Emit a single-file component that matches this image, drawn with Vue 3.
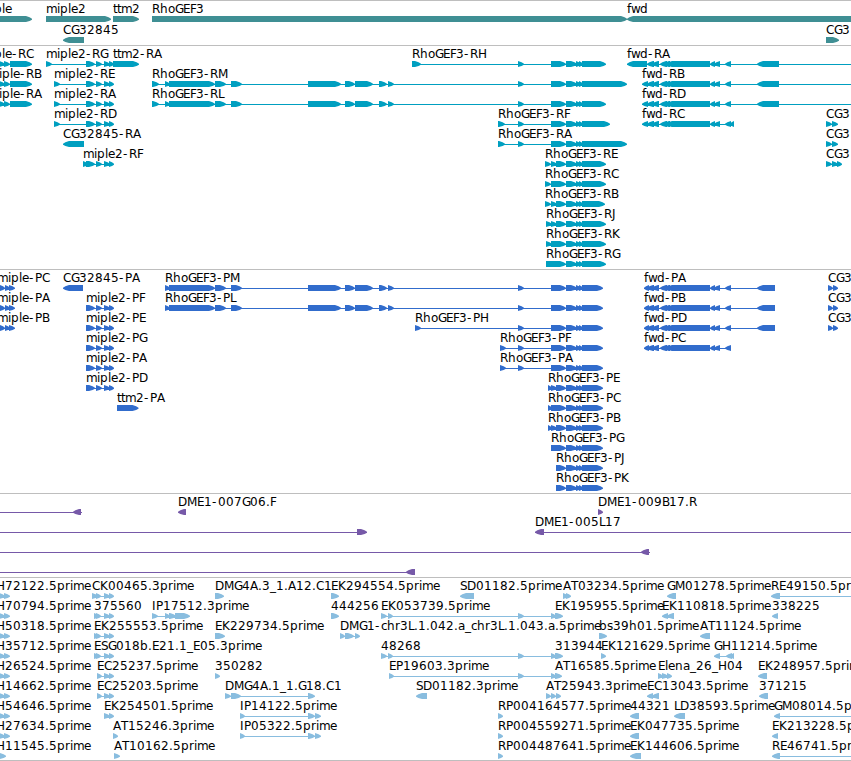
<script setup>
// Exon clusters shared by several isoforms: [start, end]
const mipleTail = [[86, 95], [96, 102], [104, 110], [109, 114]]
const rhoBody = [[169, 215], [215, 226], [231, 242], [308, 341], [345, 355], [355, 373], [379, 387], [388, 394]]
const rhoEnd = (end) => [[566, 577], [576, 581], [579, 583], [582, end]]
const rhoTail = (end) => [[551, 566], ...rhoEnd(end)]
const fwdBody = [[647, 654], [652, 659], [660, 667], [663, 670], [666, 710], [710, 715], [714, 720], [725, 731]]

const f = (label, x, row, exons, dir = 1, line = null) => ({ label, x, row, exons, dir, line })
const rows = (labels, x, first, exons, dir = 1, line = null) =>
    labels.map((label, i) => f(label, x, first + i, exons, dir, line))

const tracks = [
    {
        name: 'gene', height: 45, step: 21, color: '#3f8f94',
        features: [
            f('miple', -20, 0, [[-20, 32]]),
            f('miple2', 46, 0, [[46, 111]]),
            f('ttm2', 113, 0, [[113, 139]]),
            f('RhoGEF3', 152, 0, [[152, 627]]),
            f('fwd', 627, 0, [[627, 900]], -1),
            f('CG32845', 63, 1, [[63, 84]], -1),
            f('CG3', 826, 1, [[826, 839]])
        ]
    },
    {
        name: 'transcript', height: 224, step: 20, color: '#009fc0',
        features: [
            f('miple-RC', -20, 0, [[-2, 5], [4, 10], [10, 32]]),
            f('miple-RB', -12, 1, [[-2, 5], [4, 10], [10, 32]]),
            f('miple-RA', -12, 2, [[-2, 5], [4, 10], [10, 32]]),
            f('miple2-RG', 46, 0, [[46, 52], ...mipleTail]),
            f('ttm2-RA', 113, 0, [[113, 139]]),
            ...rows(['miple2-RE', 'miple2-RA', 'miple2-RD'], 54, 1, [[54, 60], ...mipleTail]),
            f('CG32845-RA', 63, 4, [[63, 84]], -1),
            f('miple2-RF', 83, 5, [[83, 88], ...mipleTail]),
            f('RhoGEF3-RM', 152, 1, [[152, 159], [165, 170], ...rhoBody, [518, 524], ...rhoTail(627)]),
            f('RhoGEF3-RL', 152, 2, [[152, 159], [165, 170], ...rhoBody, [518, 524], ...rhoTail(606)]),
            f('RhoGEF3-RH', 412, 0, [[412, 421], [518, 524], ...rhoTail(606)]),
            f('RhoGEF3-RF', 498, 3, [[498, 505], [518, 524], ...rhoTail(610)]),
            f('RhoGEF3-RA', 498, 4, [[498, 505], [518, 524], ...rhoTail(627)]),
            f('RhoGEF3-RE', 545, 5, [[545, 551], [551, 557], [556, 566], ...rhoEnd(606)]),
            f('RhoGEF3-RC', 545, 6, [[545, 551], ...rhoTail(606)]),
            f('RhoGEF3-RB', 545, 7, [[545, 551], [551, 557], [556, 566], ...rhoEnd(605)]),
            f('RhoGEF3-RJ', 546, 8, [[546, 552], [551, 557], [556, 566], ...rhoEnd(606)]),
            f('RhoGEF3-RK', 546, 9, [[546, 552], ...rhoTail(606)]),
            f('RhoGEF3-RG', 546, 10, [[546, 566], ...rhoEnd(606)]),
            f('fwd-RA', 627, 0, [[627, 647], ...fwdBody, [757, 779]], -1, [627, 851]),
            ...rows(['fwd-RB', 'fwd-RD'], 642, 1, [[642, 648], ...fwdBody, [757, 779]], -1, [642, 851]),
            f('fwd-RC', 642, 3, [[642, 648], ...fwdBody, [730, 734]], -1),
            ...rows(['CG3', 'CG3'], 826, 3, [[826, 832], [832, 838]]),
            f('CG3', 826, 5, [[826, 832], [832, 838], [837, 842]])
        ]
    },
    {
        name: 'protein', height: 224, step: 20, color: '#316ccc',
        features: [
            ...rows(['miple-PC', 'miple-PA', 'miple-PB'], -3, 0, [[0, 5], [5, 10], [9, 15]]),
            f('CG32845-PA', 63, 0, [[63, 83]], -1),
            ...rows(['miple2-PF', 'miple2-PE', 'miple2-PG', 'miple2-PA', 'miple2-PD'], 86, 1, mipleTail),
            f('ttm2-PA', 117, 6, [[117, 138.5]]),
            ...rows(['RhoGEF3-PM', 'RhoGEF3-PL'], 165, 0, [[165, 170], ...rhoBody, [518, 524], ...rhoTail(603)]),
            f('RhoGEF3-PH', 415, 2, [[415, 421], [518, 524], ...rhoTail(603)]),
            ...rows(['RhoGEF3-PF', 'RhoGEF3-PA'], 500, 3, [[500, 506], [518, 524], ...rhoTail(603)]),
            f('RhoGEF3-PE', 548, 5, [[548, 552], [551, 557], [556, 566], ...rhoEnd(603)]),
            f('RhoGEF3-PC', 548, 6, [[548, 552], ...rhoTail(603)]),
            f('RhoGEF3-PB', 548, 7, [[548, 552], [551, 557], [556, 566], ...rhoEnd(603)]),
            f('RhoGEF3-PG', 551, 8, rhoTail(603)),
            ...rows(['RhoGEF3-PJ', 'RhoGEF3-PK'], 556, 9, [[556, 566], ...rhoEnd(603)]),
            ...rows(['fwd-PA', 'fwd-PB', 'fwd-PD'], 644, 0, [[644, 649], ...fwdBody, [757, 775]], -1),
            f('fwd-PC', 644, 3, [[644, 649], ...fwdBody], -1),
            ...rows(['CG3', 'CG3', 'CG3'], 828, 0, [[828, 833], [833, 838]])
        ]
    },
    {
        name: 'bac', height: 84, step: 20, color: '#7659a8',
        features: [
            f('', 0, 0, [[73, 81]], -1, [0, 82]),
            f('DME1-007G06.F', 178, 0, [[178, 186]], -1),
            f('DME1-009B17.R', 598, 0, [[598, 603]]),
            f('', 0, 1, [[357, 367]], 1, [0, 367]),
            f('DME1-005L17', 535, 1, [[535, 544]], -1, [535, 851]),
            f('', 0, 2, [[641, 649]], -1, [0, 650]),
            f('', 0, 3, [[406, 415]], -1, [0, 415])
        ]
    },
    {
        name: 'est', height: 183, step: 20, color: '#89bddf',
        features: [
            ...rows(['RH72122.5prime', 'RH70794.5prime', 'RH50318.5prime', 'RH35712.5prime', 'RH26524.5prime',
                'RH14662.5prime', 'RH54646.5prime', 'RH27634.5prime'], -12, 0, [[-2, 5], [4, 10]]),
            f('RH11545.5prime', -12, 8, [[0, 6]]),
            f('CK00465.3prime', 92, 0, [[92, 98], [96, 101], [104, 110], [109, 114]]),
            ...rows(['375560', 'EK255553.5prime', 'ESG018b.E21.1_E05.3prime'], 94, 1, [[94, 99], [96, 101], [104, 110], [109, 114]]),
            ...rows(['EC25237.5prime', 'EC25203.5prime'], 97, 4, [[97, 102], [104, 110], [109, 114]]),
            f('EK254501.5prime', 104, 6, [[104, 110], [109, 114]]),
            f('AT15246.3prime', 113, 7, [[113, 118]]),
            f('AT10162.5prime', 114, 8, [[114, 120]]),
            f('DMG4A.3_1.A12.C1', 215, 0, [[215, 224]]),
            f('IP17512.3prime', 152, 1, [[152, 158], [165, 170], [169, 176], [175, 190]]),
            f('EK229734.5prime', 215, 2, [[215, 225]]),
            f('350282', 215, 4, [[215, 220]]),
            f('DMG4A.1_1.G18.C1', 225, 5, [[225, 231], [231, 241], [308, 315]]),
            ...rows(['IP14122.5prime', 'IP05322.5prime'], 240, 6, [[240, 245], [308, 315], [315, 321]]),
            f('EK294554.5prime', 331, 0, [[331, 339]]),
            f('444256', 331, 1, [[331, 339]]),
            f('EK053739.5prime', 381, 1, [[381, 387], [388, 393], [518, 524], [551, 556], [555, 563]]),
            f('DMG1-chr3L.1.042.a_chr3L.1.043.a.5prime', 340, 2, [[340, 345], [345, 354], [355, 360]]),
            f('48268', 381, 3, [[381, 387], [388, 393], [518, 524], [551, 556], [555, 563]]),
            f('EP19603.3prime', 389, 4, [[389, 394], [518, 524], [551, 556], [555, 562]]),
            f('SD01182.5prime', 460, 0, [[460, 474]], -1),
            f('SD01182.3prime', 416, 5, [[416, 427]], -1),
            ...rows(['RP004164577.5prime', 'RP004559271.5prime', 'RP004487641.5prime'], 498, 6, [[498, 503]]),
            f('AT03234.5prime', 563, 0, [[563, 568], [566, 571]]),
            f('EK195955.5prime', 555, 1, []),
            f('313944', 555, 3, []),
            f('AT16585.5prime', 555, 4, []),
            f('AT25943.3prime', 546, 5, [[546, 551], [551, 556], [556, 561]]),
            f('GM01278.5prime', 667, 0, [[667, 676]], -1),
            f('EK110818.5prime', 662, 1, [[662, 668], [667, 674]], -1),
            f('bs39h01.5prime', 599, 2, [[599, 607]]),
            f('AT11124.5prime', 700, 2, [[700, 710]], -1),
            f('EK121629.5prime', 601, 3, [[601, 606]]),
            f('GH11214.5prime', 714, 3, [[714, 720], [726, 732], [730, 734]], -1),
            f('Elena_26_H04', 658, 4, [[658, 663], [662, 668], [667, 672]]),
            f('EK248957.5prime', 758, 4, [[758, 767]], -1),
            f('EC13043.5prime', 647, 5, [[647, 653], [652, 659]], -1),
            f('371215', 759, 5, [[759, 768]], -1),
            f('44321', 630, 6, [[630, 639]], -1),
            f('LD38593.5prime', 674, 6, [[674, 685]], -1),
            f('GM08014.5prime', 774, 6, [[774, 780]], -1, [774, 851]),
            f('EK047735.5prime', 630, 7, [[630, 639]], -1),
            f('EK213228.5prime', 772, 7, [[772, 778]], -1),
            f('EK144606.5prime', 630, 8, [[630, 641]], -1),
            f('RE46741.5prime', 772, 8, [[772, 780]], -1, [772, 851]),
            f('RE49150.5prime', 771, 0, [[771, 780]], -1, [771, 851]),
            f('338225', 772, 1, [[772, 778]], -1)
        ]
    }
]

// Whole-pixel advances of the label face
const advances = {
    m: 11, i: 3, p: 8, l: 3, e: 7, r: 5, t: 4, h: 8, o: 7, f: 4, w: 9, d: 8, b: 8, s: 6, n: 8, a: 7, c: 6,
    A: 8, B: 7, C: 8, D: 9, E: 7, F: 6, G: 8, H: 9, I: 4, J: 4, K: 8, L: 6, M: 10, P: 7, R: 8, S: 7, T: 7,
    '-': 6, '.': 4, _: 6
}

const glyphX = (label, x) => {
    let pos = x
    return [...label].map((c) => {
        const at = pos
        pos += advances[c] ?? 8
        return at
    }).join(' ')
}

// Bar with a slightly rounded point on the side it is transcribed towards
const arrowPath = ([a, b], dir, top) => {
    const head = Math.min(6, b - a)
    const tip = dir > 0 ? b : a
    const tail = dir > 0 ? a : b
    const neck = tip - dir * head
    const mid = tip - dir * head * 0.4
    return `M${tail} ${top}H${neck}L${mid} ${top + 1.3}L${tip} ${top + 2.7}V${top + 3.7}L${mid} ${top + 4.9}L${neck} ${top + 6}H${tail}Z`
}

const featurePath = (item, step) => item.exons.map((e) => arrowPath(e, item.dir, 15 + item.row * step)).join('')

const intron = (item) => {
    if (item.line) return item.line
    if (item.exons.length < 2) return null
    return [item.exons[0][0], item.exons[item.exons.length - 1][1] - 1]
}
</script>

<template>
    <main class="browser">
        <section v-for="track in tracks" :key="track.name" class="track" :style="{ height: `${track.height}px` }">
            <svg class="lane" width="851" :height="track.height - 1" :fill="track.color">
                <g v-for="(item, index) in track.features" :key="index">
                    <rect v-if="intron(item)" :x="intron(item)[0]" :y="18 + item.row * track.step"
                        :width="intron(item)[1] - intron(item)[0]" height="1" />
                    <path :d="featurePath(item, track.step)" />
                    <text v-if="item.label" class="label" :x="glyphX(item.label, item.x)"
                        :y="12 + item.row * track.step">{{ item.label }}</text>
                </g>
            </svg>
        </section>
    </main>
</template>

<style>
body {
    margin: 0;
    background: #fff;
}
</style>

<style scoped>
.browser {
    display: flex;
    flex-direction: column;
    width: 851px;
    height: 760px;
    overflow: hidden;
    background: #fff;
    border-bottom: 1px solid #bebebe;
}

.track {
    box-sizing: border-box;
    flex: none;
    border-top: 1px solid #bebebe;
}

.lane {
    display: block;
    overflow: hidden;
}

.label {
    fill: #000;
    font: 12px "DejaVu Sans", sans-serif;
}
</style>
